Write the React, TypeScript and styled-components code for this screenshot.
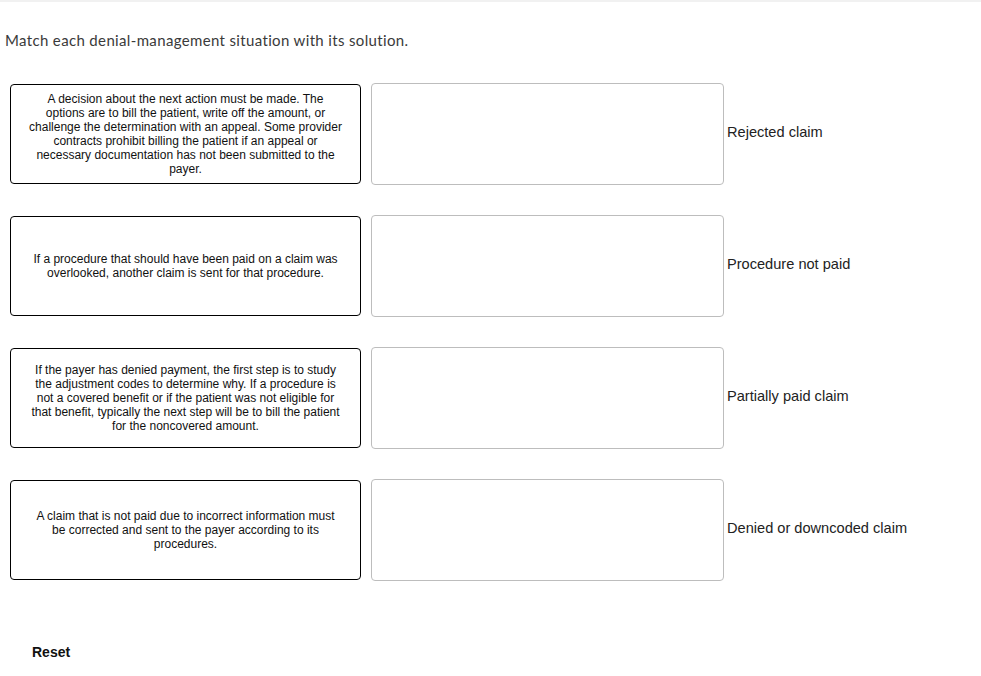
import React from "react";
import styled, { createGlobalStyle } from "styled-components";

const GlobalStyle = createGlobalStyle`
  body {
    margin: 0;
    background: #fff;
    font-family: "Liberation Sans", Arial, sans-serif;
    color: #111;
  }
`;

const items = [
  {
    prompt:
      "A decision about the next action must be made. The options are to bill the patient, write off the amount, or challenge the determination with an appeal. Some provider contracts prohibit billing the patient if an appeal or necessary documentation has not been submitted to the payer.",
    label: "Rejected claim",
  },
  {
    prompt:
      "If a procedure that should have been paid on a claim was overlooked, another claim is sent for that procedure.",
    label: "Procedure not paid",
  },
  {
    prompt:
      "If the payer has denied payment, the first step is to study the adjustment codes to determine why. If a procedure is not a covered benefit or if the patient was not eligible for that benefit, typically the next step will be to bill the patient for the noncovered amount.",
    label: "Partially paid claim",
  },
  {
    prompt:
      "A claim that is not paid due to incorrect information must be corrected and sent to the payer according to its procedures.",
    label: "Denied or downcoded claim",
  },
];

const App = () => {
  return (
    <>
      <GlobalStyle />
      <Page>
        <TopBar />
        <Title>Match each denial-management situation with its solution.</Title>
        <MatchGrid>
          {items.map((item, ind) => (
            <React.Fragment key={ind}>
              <PromptCard>{item.prompt}</PromptCard>
              <DropZone />
              <Label>{item.label}</Label>
            </React.Fragment>
          ))}
        </MatchGrid>
        <ResetButton>Reset</ResetButton>
      </Page>
    </>
  );
};

const Page = styled.div`
  width: 981px;
  min-height: 676px;
`;

const TopBar = styled.div`
  height: 2px;
  background-color: #f1f1f1;
`;

const Title = styled.p`
  margin: 28px 0 0 5px;
  font-family: Lato, "Open Sans", sans-serif;
  font-size: 15px;
  line-height: 20px;
  letter-spacing: 0.35px;
  color: #3a3a3a;
`;

const MatchGrid = styled.div`
  display: grid;
  grid-template-columns: 351px 353px auto;
  grid-auto-rows: 102px;
  column-gap: 10px;
  row-gap: 30px;
  align-items: center;
  margin: 33px 0 0 10px;
`;

const PromptCard = styled.div`
  box-sizing: border-box;
  height: 100px;
  display: flex;
  align-items: center;
  justify-content: center;
  padding: 0 18px;
  border: 1px solid #000;
  border-radius: 4px;
  font-size: 12px;
  line-height: 14px;
  text-align: center;
  color: #111;
`;

const DropZone = styled.div`
  box-sizing: border-box;
  height: 102px;
  border: 1px solid #bdbdbd;
  border-radius: 4px;
`;

const Label = styled.div`
  margin-left: -7px;
  padding-bottom: 4px;
  font-size: 14.6px;
  color: #222;
`;

const ResetButton = styled.button`
  margin: 63px 0 0 32px;
  padding: 0;
  border: none;
  background: none;
  font-family: "Liberation Sans", Arial, sans-serif;
  font-weight: bold;
  font-size: 14px;
  color: #111;
  cursor: pointer;
`;

export default App;
